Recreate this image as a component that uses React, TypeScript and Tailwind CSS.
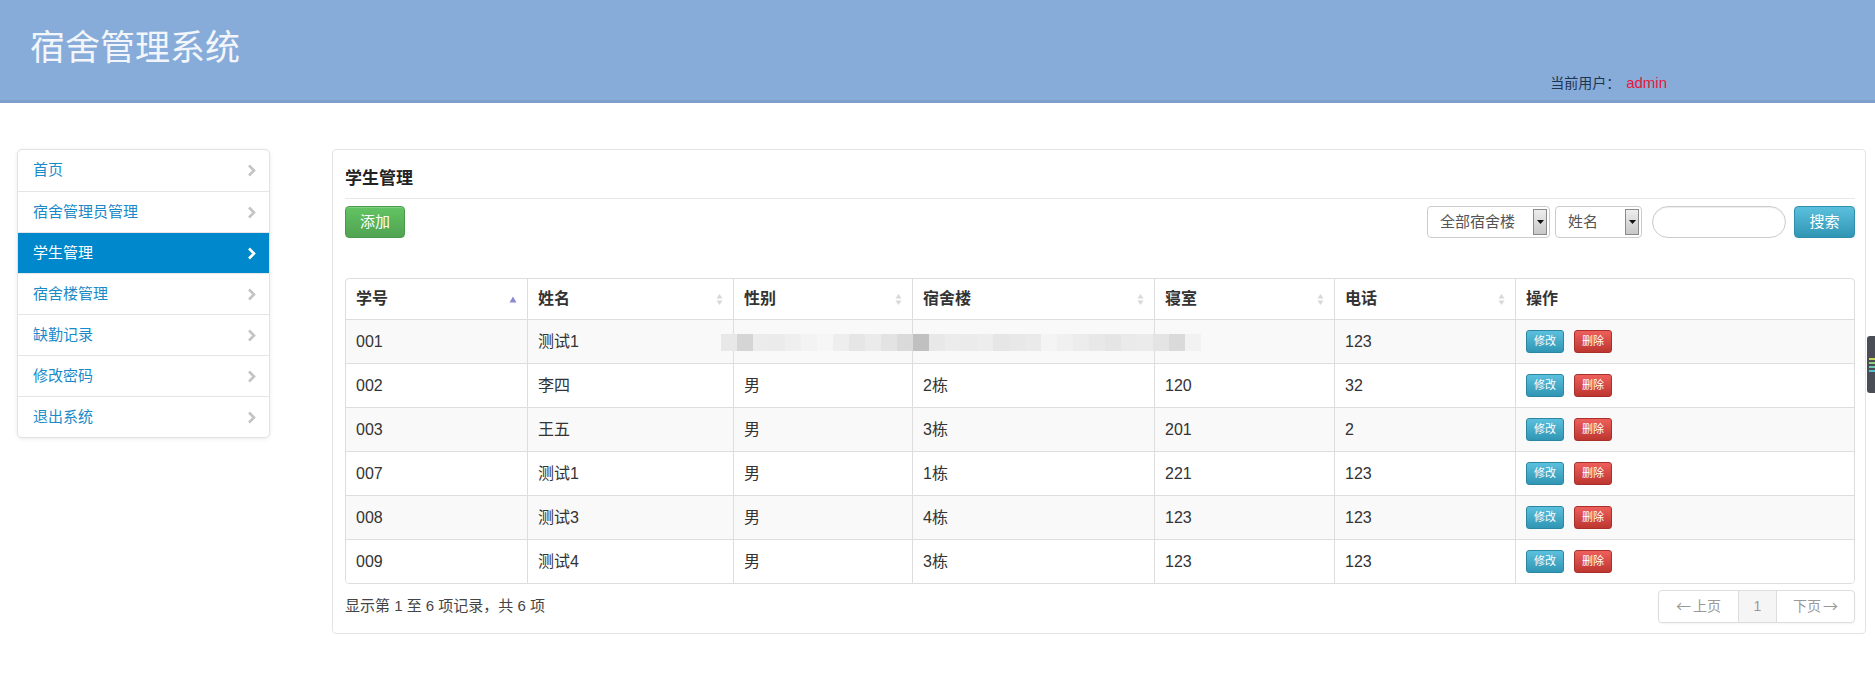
import React from "react";

const font = "font-['Liberation_Sans','Noto_Sans_CJK_SC',sans-serif]";

const navItems = ["首页", "宿舍管理员管理", "学生管理", "宿舍楼管理", "缺勤记录", "修改密码", "退出系统"];

const rows = [
  ["001", "测试1", "", "", "", "123"],
  ["002", "李四", "男", "2栋", "120", "32"],
  ["003", "王五", "男", "3栋", "201", "2"],
  ["007", "测试1", "男", "1栋", "221", "123"],
  ["008", "测试3", "男", "4栋", "123", "123"],
  ["009", "测试4", "男", "3栋", "123", "123"],
];

const headers = ["学号", "姓名", "性别", "宿舍楼", "寝室", "电话", "操作"];
const widths = [181, 206, 179, 242, 180, 181, 342];

const blur = [
  "#e8e8e8", "#d5d5d5", "#ececec", "#ebebeb", "#efefef", "#f3f3f3", "#f6f6f6", "#eeeeee",
  "#e6e6e6", "#ebebeb", "#e3e3e3", "#dadada", "#c0c0c0", "#e8e8e8", "#ececec", "#ebebeb",
  "#ededed", "#e6e6e6", "#e8e8e8", "#eaeaea", "#f4f4f4", "#f0f0f0", "#ececec", "#e8e8e8",
  "#e5e5e5", "#eaeaea", "#ebebeb", "#e4e4e4", "#dadada", "#f2f2f2",
];

function Chevron({ color }: { color: string }) {
  return (
    <svg width="9" height="13" viewBox="0 0 9 13">
      <path d="M2 1.5 L7 6.5 L2 11.5" fill="none" stroke={color} strokeWidth="2.6" strokeLinejoin="miter" />
    </svg>
  );
}

function SortBoth() {
  return (
    <svg width="7" height="13" viewBox="0 0 7 13">
      <path d="M0.5 5.5 L3.5 1 L6.5 5.5 Z" fill="#d8d8d8" />
      <path d="M0.5 7.5 L3.5 12 L6.5 7.5 Z" fill="#d8d8d8" />
    </svg>
  );
}

function SortUp() {
  return (
    <svg width="8" height="7" viewBox="0 0 8 7">
      <path d="M0.5 6.5 L4 0.5 L7.5 6.5 Z" fill="#8a8ad2" />
    </svg>
  );
}

function SelectBox({ label, width }: { label: string; width: number }) {
  return (
    <div
      className="h-[32px] border border-[#cccccc] rounded-[4px] bg-white flex items-center justify-between pl-[12px] pr-[2px]"
      style={{ width }}
    >
      <span className="text-[15px] text-[#555]">{label}</span>
      <div className="w-[14px] h-[26px] border border-[#8a8a8a] bg-gradient-to-b from-[#eeeeee] to-[#c8c8c8] flex items-center justify-center">
        <svg width="7" height="4" viewBox="0 0 7 4">
          <path d="M0 0 L7 0 L3.5 4 Z" fill="#111" />
        </svg>
      </div>
    </div>
  );
}

export default function App() {
  return (
    <div className={`relative min-h-[693px] bg-white text-[#333] ${font}`}>
      <header className="h-[103px] bg-[#87acd9] border-b-[3px] border-[#7e9fcb] flex items-start">
        <div className="pl-[30px] pt-[28px] text-[35px] leading-[40px] text-[#f2f6fb]">宿舍管理系统</div>
        <div className="ml-auto mr-[208px] mt-[73px] text-[14px] leading-[20px]">
          <span className="text-[#1e3552]">当前用户：</span>
          <span className="text-[#e8153c] text-[15px] ml-[6px]">admin</span>
        </div>
      </header>

      <div className="flex items-start pl-[17px] pt-[46px]">
        <nav className="w-[253px] border border-[#e2e2e2] rounded-[5px] bg-white shadow-[0_1px_4px_rgba(0,0,0,0.08)] overflow-hidden">
          {navItems.map((t, i) => {
            const active = t === "学生管理";
            return (
              <div
                key={t}
                className={`h-[41px] flex items-center justify-between pl-[15px] pr-[13px] text-[15px] ${
                  i > 0 ? "border-t border-[#e5e5e5]" : ""
                } ${active ? "bg-[#0088cc] text-white border-[#0088cc]" : "text-[#1a8ac9]"}`}
              >
                <span>{t}</span>
                <Chevron color={active ? "#ffffff" : "#c4c4c4"} />
              </div>
            );
          })}
        </nav>

        <main className="ml-[62px] w-[1534px] border border-[#e4e4e4] rounded-[4px] bg-white pl-[12px] pr-[10px] pt-[9px] pb-[10px]">
          <div className="h-[40px] flex items-center border-b border-[#e8e8e8] text-[17px] font-bold text-[#222]">学生管理</div>

          <div className="mt-[7px] h-[32px] flex items-center">
            <button className="w-[60px] h-[32px] rounded-[4px] border border-[#4a9a4a] bg-gradient-to-b from-[#62c462] to-[#51a351] text-white text-[15px] shadow-[inset_0_1px_0_rgba(255,255,255,0.2)]">
              添加
            </button>
            <div className="ml-auto flex items-center">
              <SelectBox label="全部宿舍楼" width={123} />
              <div className="w-[5px]" />
              <SelectBox label="姓名" width={87} />
              <div className="ml-[10px] w-[134px] h-[32px] rounded-full border border-[#cccccc] bg-white shadow-[inset_0_1px_1px_rgba(0,0,0,0.075)]" />
              <button className="ml-[8px] w-[61px] h-[32px] rounded-[4px] border border-[#2f8fac] bg-gradient-to-b from-[#5bc0de] to-[#2f96b4] text-white text-[15px]">
                搜索
              </button>
            </div>
          </div>

          <div className="relative mt-[40px] border border-[#dddddd] rounded-[4px] overflow-hidden">
            <table className="w-full table-fixed border-separate border-spacing-0 text-[16px]">
              <colgroup>
                {widths.map((w, i) => (
                  <col key={i} style={{ width: w }} />
                ))}
              </colgroup>
              <thead>
                <tr>
                  {headers.map((h, i) => (
                    <th
                      key={h}
                      className={`h-[40px] text-left font-bold text-[#333] pl-[10px] pr-[10px] ${i > 0 ? "border-l border-[#dddddd]" : ""}`}
                    >
                      <div className="flex items-center justify-between">
                        <span>{h}</span>
                        {i === 0 ? <SortUp /> : i < 6 ? <SortBoth /> : null}
                      </div>
                    </th>
                  ))}
                </tr>
              </thead>
              <tbody>
                {rows.map((r, ri) => (
                  <tr key={r[0]} className={ri % 2 === 0 ? "bg-[#f9f9f9]" : "bg-white"}>
                    {r.map((c, ci) => (
                      <td
                        key={ci}
                        className={`h-[44px] pl-[10px] border-t border-[#dddddd] text-[#333] ${ci > 0 ? "border-l" : ""}`}
                      >
                        {c}
                      </td>
                    ))}
                    <td className="h-[44px] pl-[10px] border-t border-l border-[#dddddd]">
                      <div className="flex items-center gap-[10px]">
                        <span className="w-[38px] h-[23px] rounded-[3px] border border-[#2a87a3] bg-gradient-to-b from-[#5bc0de] to-[#2f96b4] text-white text-[11px] flex items-center justify-center">
                          修改
                        </span>
                        <span className="w-[38px] h-[23px] rounded-[3px] border border-[#a8302a] bg-gradient-to-b from-[#ee5f5b] to-[#bd362f] text-white text-[11px] flex items-center justify-center">
                          删除
                        </span>
                      </div>
                    </td>
                  </tr>
                ))}
              </tbody>
            </table>
            <div className="absolute left-[375px] top-[55px] flex">
              {blur.map((b, i) => (
                <div key={i} className="w-[16px] h-[17px]" style={{ backgroundColor: b }} />
              ))}
            </div>
          </div>

          <div className="mt-[6px] flex items-center">
            <span className="text-[15px] text-[#444] font-normal">显示第 1 至 6 项记录，共 6 项</span>
            <div className="ml-auto flex h-[33px] border border-[#dddddd] rounded-[4px] shadow-[0_1px_2px_rgba(0,0,0,0.05)] text-[14px] text-[#999] overflow-hidden">
              <div className="w-[79px] flex items-center justify-center gap-[2px]">
                <span className="font-['Noto_Sans_CJK_SC',sans-serif] text-[15px]">←</span>
                <span>上页</span>
              </div>
              <div className="w-[38px] flex items-center justify-center border-l border-[#dddddd] bg-[#f5f5f5]">1</div>
              <div className="w-[78px] flex items-center justify-center gap-[2px] border-l border-[#dddddd]">
                <span>下页</span>
                <span className="font-['Noto_Sans_CJK_SC',sans-serif] text-[15px]">→</span>
              </div>
            </div>
          </div>
        </main>
      </div>

      <div className="absolute right-0 top-[336px] w-[8px] h-[57px] rounded-l-[3px] bg-[#4a4d55] flex flex-col justify-center gap-[2px] pl-[2px]">
        <div className="h-[2px] bg-[#c9d65a]" />
        <div className="h-[2px] bg-[#8fd07a]" />
        <div className="h-[2px] bg-[#6ccdb0]" />
        <div className="h-[2px] bg-[#4fc2d0]" />
      </div>
    </div>
  );
}
